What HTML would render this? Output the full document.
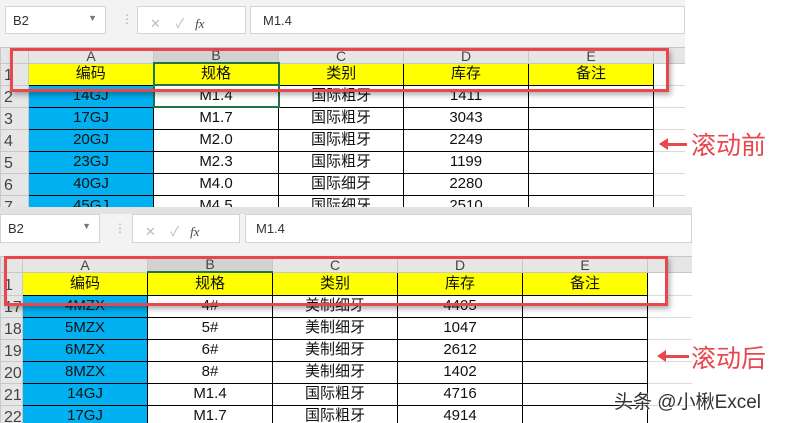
<!DOCTYPE html>
<html><head><meta charset="utf-8"><style>
body{margin:0;width:788px;height:423px;background:#fff;position:relative;overflow:hidden;font-family:"Liberation Sans","Noto Sans CJK SC",sans-serif;}
.a{position:absolute;}
.tb{background:#f3f3f3;}
.nb{background:#fff;border:1px solid #d4d4d4;font-size:13px;color:#333;box-sizing:border-box;padding:6px 0 0 7px;}
.sheet{position:absolute;overflow:hidden;background:#fff;}
table{border-collapse:collapse;table-layout:fixed;font-size:15px;color:#111;}
td{padding:0;text-align:center;border:1px solid #000;overflow:hidden;white-space:nowrap;line-height:20px;}
tr.h td{background:#e6e6e6;border:1px solid #c8c8c8;color:#444;font-size:14px;line-height:14px;vertical-align:bottom;}
td.r{background:#e6e6e6;border:1px solid #c8c8c8;color:#444;text-align:left;padding-left:3px;font-size:16px;vertical-align:bottom;line-height:18px;}
td.x{border:none;border-bottom:1px solid #dadada;background:#fff;}
tr.y td.c{background:#ffff00;}
td.b{background:#00b0f0;}
tr.h td.sel{background:#d2d2d2;border-bottom:2px solid #217346;}
.red{position:absolute;border:3px solid #e8474d;box-shadow:2px 3px 5px rgba(0,0,0,.3);box-sizing:border-box;}
.lab{position:absolute;color:#e8474d;font-size:25px;font-family:"Noto Sans CJK SC",sans-serif;}
.arr{position:absolute;height:3px;background:#e8474d;}
.arr:before{content:"";position:absolute;left:-8px;top:-5px;border-right:9px solid #e8474d;border-top:6px solid transparent;border-bottom:6px solid transparent;}
</style></head><body>
<div class="a tb" style="left:0;top:0;width:685px;height:47px"></div>
<div class="a nb" style="left:5px;top:6px;width:101px;height:28px">B2<span style="position:absolute;right:8px;top:6px;font-size:9px;color:#777">▼</span></div>
<div class="a" style="left:121px;top:12px;color:#aaa;font-size:12px">⋮</div>
<div class="a nb" style="left:137px;top:6px;width:109px;height:28px;color:#bbb;padding-left:12px">✕ &nbsp;&nbsp; ✓ &nbsp;&nbsp;<i style="color:#444;font-family:'Liberation Serif',serif">fx</i></div>
<div class="a nb" style="left:250px;top:6px;width:435px;height:28px;padding-left:12px">M1.4</div>
<div class="sheet" style="left:0;top:47px;width:685px;height:160px">
<table style="width:685px">
<colgroup><col style="width:28px"><col style="width:125px"><col style="width:125px"><col style="width:125px"><col style="width:125px"><col style="width:125px"><col style="width:32px"></colgroup>
<tr class="h" style="height:15px"><td></td><td>A</td><td class="sel">B</td><td>C</td><td>D</td><td>E</td><td class="x" style="background:#e6e6e6"></td></tr>
<tr class="y" style="height:22px"><td class="r">1</td><td class="c">编码</td><td class="c" style="border:2px solid #217346">规格</td><td class="c">类别</td><td class="c">库存</td><td class="c">备注</td><td class="x"></td></tr>
<tr style="height:22px"><td class="r">2</td><td class="b">14GJ</td><td style="border:2px solid #217346">M1.4</td><td>国际粗牙</td><td>1411</td><td></td><td class="x"></td></tr>
<tr style="height:22px"><td class="r">3</td><td class="b">17GJ</td><td>M1.7</td><td>国际粗牙</td><td>3043</td><td></td><td class="x"></td></tr>
<tr style="height:22px"><td class="r">4</td><td class="b">20GJ</td><td>M2.0</td><td>国际粗牙</td><td>2249</td><td></td><td class="x"></td></tr>
<tr style="height:22px"><td class="r">5</td><td class="b">23GJ</td><td>M2.3</td><td>国际粗牙</td><td>1199</td><td></td><td class="x"></td></tr>
<tr style="height:22px"><td class="r">6</td><td class="b">40GJ</td><td>M4.0</td><td>国际细牙</td><td>2280</td><td></td><td class="x"></td></tr>
<tr style="height:22px"><td class="r">7</td><td class="b">45GJ</td><td>M4.5</td><td>国际细牙</td><td>2510</td><td></td><td class="x"></td></tr>
</table></div>
<div class="a" style="left:0;top:207px;width:692px;height:7px;background:#e2e2e2"></div>
<div class="red" style="left:10px;top:48px;width:659px;height:44px"></div>
<div class="arr" style="left:667px;top:143px;width:20px"></div>
<div class="lab" style="left:691px;top:126px">滚动前</div>
<div class="a tb" style="left:0;top:214px;width:692px;height:42px"></div>
<div class="a nb" style="left:0;top:214px;width:100px;height:29px">B2<span style="position:absolute;right:8px;top:6px;font-size:9px;color:#777">▼</span></div>
<div class="a" style="left:114px;top:221px;color:#aaa;font-size:12px">⋮</div>
<div class="a nb" style="left:132px;top:214px;width:108px;height:29px;color:#bbb;padding-left:12px">✕ &nbsp;&nbsp; ✓ &nbsp;&nbsp;<i style="color:#444;font-family:'Liberation Serif',serif">fx</i></div>
<div class="a nb" style="left:245px;top:214px;width:447px;height:29px;padding-left:10px">M1.4</div>
<div class="sheet" style="left:0;top:256px;width:692px;height:167px">
<table style="width:692px">
<colgroup><col style="width:22px"><col style="width:125px"><col style="width:125px"><col style="width:125px"><col style="width:125px"><col style="width:125px"><col style="width:45px"></colgroup>
<tr class="h" style="height:14px"><td></td><td>A</td><td class="sel">B</td><td>C</td><td>D</td><td>E</td><td class="x" style="background:#e6e6e6"></td></tr>
<tr class="y" style="height:23px"><td class="r">1</td><td class="c">编码</td><td class="c">规格</td><td class="c">类别</td><td class="c">库存</td><td class="c">备注</td><td class="x"></td></tr>
<tr style="height:22px"><td class="r">17</td><td class="b">4MZX</td><td>4#</td><td>美制细牙</td><td>4405</td><td></td><td class="x"></td></tr>
<tr style="height:22px"><td class="r">18</td><td class="b">5MZX</td><td>5#</td><td>美制细牙</td><td>1047</td><td></td><td class="x"></td></tr>
<tr style="height:22px"><td class="r">19</td><td class="b">6MZX</td><td>6#</td><td>美制细牙</td><td>2612</td><td></td><td class="x"></td></tr>
<tr style="height:22px"><td class="r">20</td><td class="b">8MZX</td><td>8#</td><td>美制细牙</td><td>1402</td><td></td><td class="x"></td></tr>
<tr style="height:22px"><td class="r">21</td><td class="b">14GJ</td><td>M1.4</td><td>国际粗牙</td><td>4716</td><td></td><td class="x"></td></tr>
<tr style="height:22px"><td class="r">22</td><td class="b">17GJ</td><td>M1.7</td><td>国际粗牙</td><td>4914</td><td></td><td class="x"></td></tr>
</table></div>
<div class="red" style="left:4px;top:256px;width:664px;height:50px"></div>
<div class="arr" style="left:665px;top:355px;width:24px"></div>
<div class="lab" style="left:691px;top:339px">滚动后</div>
<div class="a" style="left:614px;top:387px;font-size:19px;color:#333;text-shadow:0 0 2px #fff,0 0 2px #fff">头条 @小楸Excel</div>
</body></html>
